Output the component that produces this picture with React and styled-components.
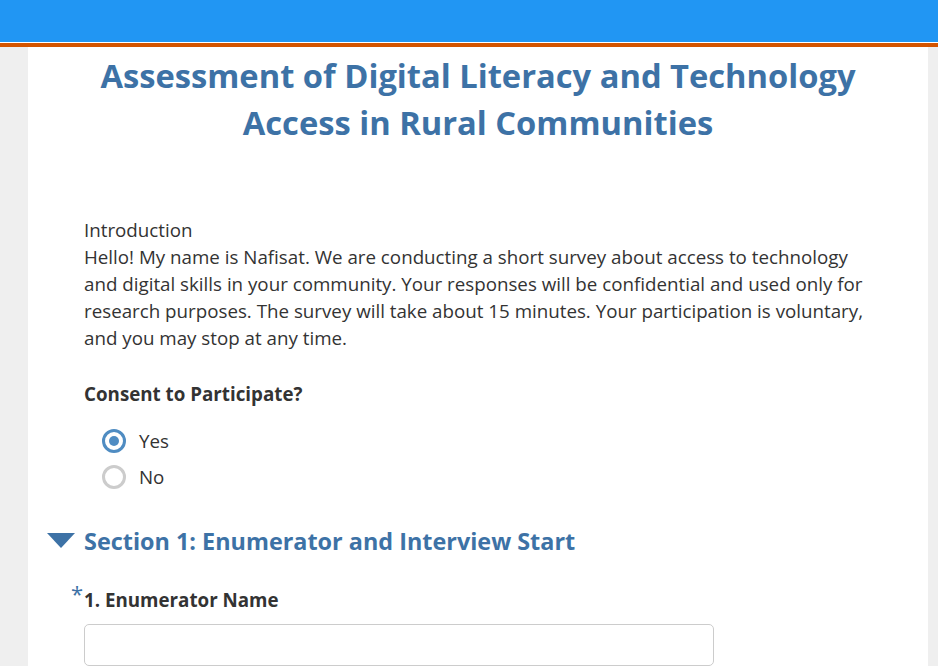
import React from 'react';
import styled, { createGlobalStyle } from 'styled-components';

const GlobalStyle = createGlobalStyle`
  html, body {
    margin: 0;
    padding: 0;
    background: #efefef;
    font-family: "Open Sans", "Liberation Sans", sans-serif;
    color: #333333;
  }
`;

const TopBar = styled.header`
  height: 42px;
  background-color: #2196f3;
  border-bottom: 1px solid #ffffff;
`;

const Stripe = styled.div`
  height: 4px;
  background-color: #d35400;
`;

const Page = styled.main`
  margin: 0 10px 0 28px;
  background: #ffffff;
  min-height: 640px;
  padding: 5px 0 40px;
`;

const Title = styled.h1`
  margin: 0 auto;
  width: 820px;
  text-align: center;
  font-size: 32.7px;
  line-height: 47px;
  font-weight: 700;
  color: #3d72a6;
`;

const Body = styled.div`
  padding: 70px 56px 0;
`;

const Intro = styled.p`
  margin: 0;
  font-size: 18.75px;
  line-height: 27px;
  color: #333333;
`;

const Question = styled.div`
  position: relative;
  margin-top: ${p => p.$top || 28}px;
`;

const Label = styled.div`
  font-size: 18.75px;
  font-weight: 700;
  line-height: 27px;
  color: #333333;
`;

const Required = styled.span`
  position: absolute;
  left: -13px;
  top: -8px;
  font-size: 22px;
  color: #3d72a6;
`;

const Options = styled.div`
  display: flex;
  flex-direction: column;
  gap: 10px;
  padding: 21px 0 0 18px;
`;

const Option = styled.label`
  display: flex;
  align-items: center;
  gap: 13px;
  font-size: 18.75px;
  line-height: 26px;
  color: #333333;
`;

const Radio = styled.span`
  box-sizing: border-box;
  width: 24px;
  height: 24px;
  border-radius: 50%;
  border: 3px solid ${p => (p.$checked ? '#4f8cc2' : '#cccccc')};
  display: flex;
  align-items: center;
  justify-content: center;

  &::after {
    content: '';
    width: 10px;
    height: 10px;
    border-radius: 50%;
    background: ${p => (p.$checked ? '#4f8cc2' : 'transparent')};
  }
`;

const SectionHeader = styled.div`
  display: flex;
  align-items: center;
  margin: 36px 0 0 -37px;
  gap: 9px;
`;

const SectionTitle = styled.h2`
  margin: 0;
  font-size: 23.4px;
  line-height: 30px;
  font-weight: 700;
  color: #3d72a6;
`;

const TextInput = styled.input`
  display: block;
  box-sizing: border-box;
  width: 630px;
  height: 42px;
  margin-top: 11px;
  border: 1px solid #cccccc;
  border-radius: 5px;
  font-family: inherit;
  font-size: 16px;
  padding: 6px 12px;
`;

const Caret = () => (
  <svg width="28" height="16" viewBox="0 0 28 16">
    <path d="M0 0 H28 L14 15 Z" fill="#3d72a6" />
  </svg>
);

export default function App() {
  return (
    <>
      <GlobalStyle />
      <TopBar />
      <Stripe />
      <Page>
        <Title>Assessment of Digital Literacy and Technology Access in Rural Communities</Title>
        <Body>
          <Intro>
            Introduction
            <br />
            Hello! My name is Nafisat. We are conducting a short survey about access to technology
            and digital skills in your community. Your responses will be confidential and used only for
            research purposes. The survey will take about 15 minutes. Your participation is voluntary,
            and you may stop at any time.
          </Intro>
          <Question $top={29}>
            <Label>Consent to Participate?</Label>
            <Options>
              <Option>
                <Radio $checked />
                Yes
              </Option>
              <Option>
                <Radio />
                No
              </Option>
            </Options>
          </Question>
          <SectionHeader>
            <Caret />
            <SectionTitle>Section 1: Enumerator and Interview Start</SectionTitle>
          </SectionHeader>
          <Question $top={30}>
            <Required>*</Required>
            <Label>1. Enumerator Name</Label>
            <TextInput type="text" />
          </Question>
        </Body>
      </Page>
    </>
  );
}
